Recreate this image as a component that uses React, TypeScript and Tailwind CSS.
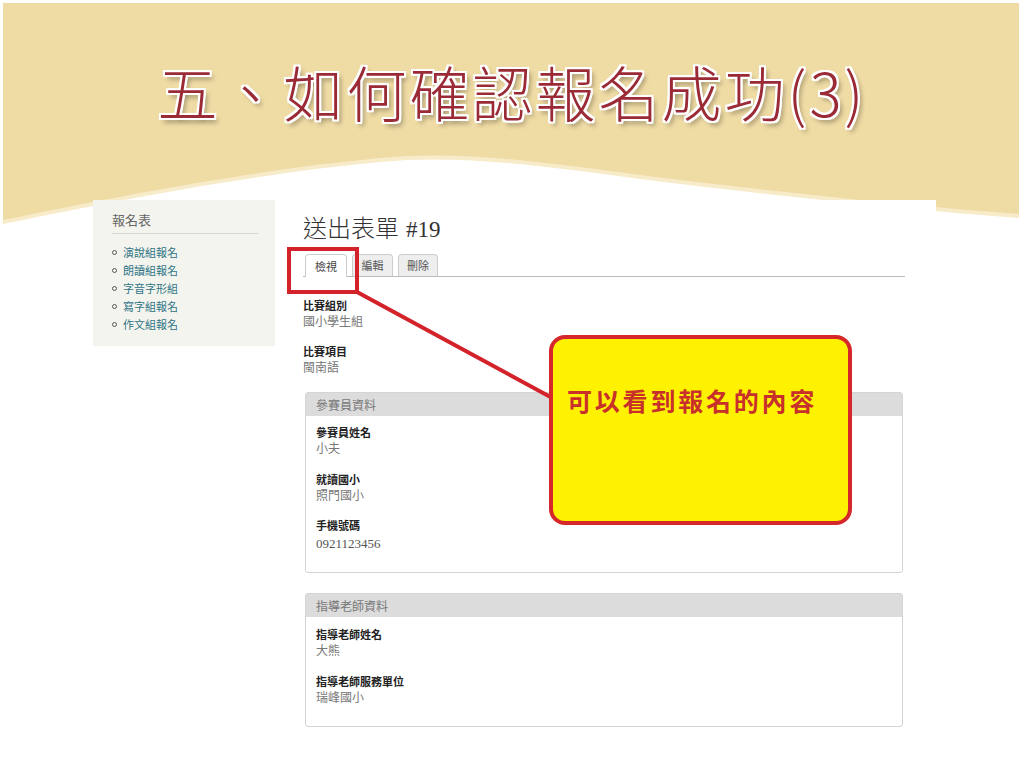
import React from "react";

const cjk = "font-['Noto_Sans_CJK_TC','Noto_Sans',sans-serif]";

function Field({
  label,
  value,
  mb = "mb-[14px]",
  num = false,
}: {
  label: string;
  value: string;
  mb?: string;
  num?: boolean;
}) {
  return (
    <div className={mb}>
      <div className="text-[11px] leading-[16px] font-bold text-[#222]">{label}</div>
      {num ? (
        <div className="text-[13px] leading-[22px] text-[#555] font-['Liberation_Serif',serif]">{value}</div>
      ) : (
        <div className="text-[12px] leading-[16px] text-[#777]">{value}</div>
      )}
    </div>
  );
}

function Box({ title, children, className = "" }: { title: string; children: React.ReactNode; className?: string }) {
  return (
    <div className={`ml-[2px] w-[598px] border border-[#d4d4d4] rounded-[3px] ${className}`}>
      <div className="h-[23px] bg-[#dcdcdc] pl-[10px] text-[12px] leading-[23px] text-[#777]">{title}</div>
      {children}
    </div>
  );
}

export default function App() {
  const sideItems = ["演說組報名", "朗讀組報名", "字音字形組", "寫字組報名", "作文組報名"];
  return (
    <div className={`relative w-[1024px] h-[768px] overflow-hidden bg-white ${cjk}`}>
      <svg className="absolute inset-0" width="1024" height="768" viewBox="0 0 1024 768">
        <path
          d="M3,3 H1019 V218 C900,209 760,194 640,179 C540,166 460,154 380,162 C250,174 100,204 3,224 Z"
          fill="#f7ebc9"
        />
        <path
          d="M3,3 H1019 V214 C900,205 760,190 640,175 C540,162 460,150 380,158 C250,170 100,200 3,220 Z"
          fill="#efdba4"
        />
      </svg>

      <div className="relative flex flex-col">
        <div className="h-[200px] flex justify-center pt-[60px]">
          <h1
            className={`text-[60px] leading-[62px] tracking-[3px] font-light text-[#9a2a35] ${cjk} [text-shadow:2px_0_0_#fff,-2px_0_0_#fff,0_2px_0_#fff,0_-2px_0_#fff,2px_2px_0_#fff,-2px_-2px_0_#fff,2px_-2px_0_#fff,-2px_2px_0_#fff,3px_4px_5px_rgba(0,0,0,0.45)]`}
          >
            五、如何確認報名成功(3)
          </h1>
        </div>

        <div className="ml-[93px] w-[843px] h-[568px] flex items-start bg-white">
          <aside className="w-[182px] h-[146px] bg-[#f4f4ef] pl-[19px] pr-[17px] pt-[11px]">
            <div className="text-[13px] leading-[18px] text-[#666] pb-[4px] border-b border-[#d6d6d0]">報名表</div>
            <ul className="mt-[9px]">
              {sideItems.map((t) => (
                <li key={t} className="flex items-center text-[11px] leading-[18px] text-[#2f7486]">
                  <span className="w-[5px] h-[5px] rounded-full border border-[#555] mr-[6px]" />
                  {t}
                </li>
              ))}
            </ul>
          </aside>

          <main className="flex-1 pl-[28px] pr-[31px] pt-[12px]">
            <div className="flex items-baseline text-[#333] leading-[30px]">
              <span className={`text-[24px] font-light ${cjk}`}>送出表單</span>
              <span className="ml-[7px] text-[23px] font-['Liberation_Serif',serif]">#19</span>
            </div>

            <div className="mt-[9px] flex items-end gap-[5px] pl-[2px] border-b border-[#bbb] h-[23px]">
              <div className="h-[23px] w-[42px] -mb-px bg-white border border-b-0 border-[#ccc] rounded-t-[4px] flex items-center justify-center text-[11px] text-[#444]">
                檢視
              </div>
              <div className="h-[22px] w-[41px] bg-[#eeeeee] border border-b-0 border-[#ccc] rounded-t-[4px] flex items-center justify-center text-[11px] text-[#555]">
                編輯
              </div>
              <div className="h-[22px] w-[40px] bg-[#eeeeee] border border-b-0 border-[#ccc] rounded-t-[4px] flex items-center justify-center text-[11px] text-[#555]">
                刪除
              </div>
            </div>

            <div className="mt-[20px]">
              <Field label="比賽組別" value="國小學生組" />
              <Field label="比賽項目" value="閩南語" mb="mb-[17px]" />
            </div>

            <Box title="參賽員資料">
              <div className="px-[10px] pt-[8px] pb-[17px]">
                <Field label="參賽員姓名" value="小夫" mb="mb-[15px]" />
                <Field label="就讀國小" value="照門國小" mb="mb-[14px]" />
                <Field label="手機號碼" value="0921123456" mb="mb-0" num />
              </div>
            </Box>

            <Box title="指導老師資料" className="mt-[20px]">
              <div className="px-[10px] pt-[9px] pb-[21px]">
                <Field label="指導老師姓名" value="大熊" mb="mb-[15px]" />
                <Field label="指導老師服務單位" value="瑞峰國小" mb="mb-0" />
              </div>
            </Box>
          </main>
        </div>
      </div>

      <svg className="absolute inset-0 pointer-events-none" width="1024" height="768" viewBox="0 0 1024 768">
        <line x1="357" y1="292" x2="556" y2="400" stroke="#d3222a" strokeWidth="4" />
      </svg>
      <div className="absolute left-[287px] top-[247px] w-[72px] h-[47px] border-[4px] border-[#d3222a]" />
      <div className="absolute left-[549px] top-[335px] w-[303px] h-[190px] bg-[#fff200] border-[4px] border-[#d6282b] rounded-[16px] pl-[14px] pt-[46px]">
        <div className={`text-[25px] leading-[30px] tracking-[2.8px] font-bold text-[#c8302b] ${cjk}`}>可以看到報名的內容</div>
      </div>
    </div>
  );
}
